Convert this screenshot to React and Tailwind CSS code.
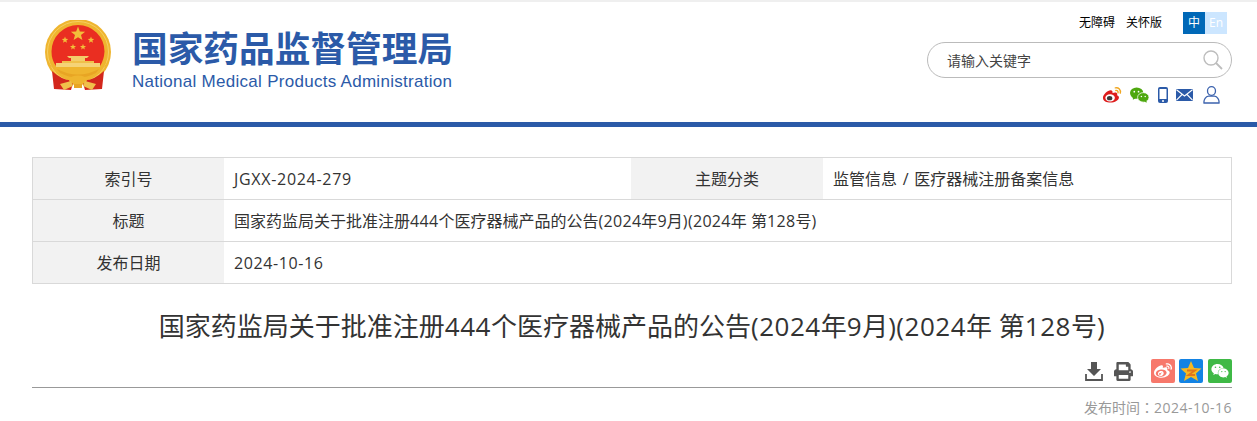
import { FaWeibo, FaWeixin, FaPrint } from "react-icons/fa";

const FONT = "[font-family:'Open_Sans','Noto_Sans_CJK_SC',sans-serif]";

// star outline around (cx, cy), r is the outer radius
const starPoints = (cx, cy, r) =>
  Array.from({ length: 10 }, (_, i) => {
    const a = -Math.PI / 2 + (i * Math.PI) / 5;
    const d = i % 2 ? r * 0.42 : r;
    return `${(cx + d * Math.cos(a)).toFixed(2)},${(cy + d * Math.sin(a)).toFixed(2)}`;
  }).join(" ");

const Emblem = () => (
  <svg width="68" height="72" viewBox="0 0 68 72" className="shrink-0">
    <circle cx="34" cy="32" r="33" fill="#efb52f" />
    <circle cx="34" cy="32" r="30.500" fill="none" stroke="#f6cf62" strokeWidth="1" />
    <path d="M34 5 A26.500 26.500 0 0 1 60.500 31.500 Q60 40 56 46 H12 Q7.500 40 7.500 31.500 A26.500 26.500 0 0 1 34 5Z" fill="#ea2e21" />
    <polygon points={starPoints(34, 14, 7.500)} fill="#f2bf3a" />
    <polygon points={starPoints(21, 20, 3.400)} fill="#f2bf3a" />
    <polygon points={starPoints(47, 20, 3.400)} fill="#f2bf3a" />
    <polygon points={starPoints(29, 27, 3.200)} fill="#f2bf3a" />
    <polygon points={starPoints(39, 27, 3.200)} fill="#f2bf3a" />
    <path d="M23 36 H45 L43 38 H41 V41 H27 V38 H25 Z" fill="#f3cd6a" />
    <path d="M18 41 H50 V44 H18 Z" fill="#f0c04a" />
    <path d="M12 43 H56 V47 H12 Z" fill="#f5d377" />
    <path d="M8 51 Q20 62 30 60 L27 70 L10 69 Z" fill="#d3271c" />
    <path d="M60 51 Q48 62 38 60 L41 70 L58 69 Z" fill="#d3271c" />
    <path d="M6 46 Q34 66 62 46 L64 40 Q60 50 50 55 Q34 62 18 55 Q8 50 4 40 Z" fill="#efb52f" />
    <path d="M13 49 Q34 60 55 49 L52 53 Q34 62 16 53 Z" fill="#e8a524" />
    <ellipse cx="34" cy="60" rx="9" ry="4.500" fill="#efb52f" />
    <path d="M16 64 L27 61 L29 66 L20 70 Z M52 64 L41 61 L39 66 L48 70 Z" fill="#f0c04a" />
    <path d="M30 64 H38 V68 H30 Z" fill="#e8a524" />
  </svg>
);

const SearchIcon = () => (
  <svg width="20" height="20" viewBox="0 0 20 20" fill="none" stroke="#bdbdbd" strokeWidth="1.400">
    <circle cx="8" cy="8" r="7" />
    <path d="M13 13 L19 19" strokeWidth="1.800" />
  </svg>
);

const WeiboColor = () => (
  <svg width="20" height="18" viewBox="0 0 21 18">
    <path d="M1 12c0-3.500 5-8 8-8 2 0 2.400 1.600 2 3 3-1 5-.6 5 1.200 0 .6-.2 1-.2 1 1.500.5 2 1.500 2 2.500 0 2.800-4.500 5.300-8.800 5.300S1 15.500 1 12z" fill="#dd1c1c" />
    <ellipse cx="8.500" cy="12" rx="5" ry="3.800" fill="#fff" />
    <ellipse cx="8" cy="12.300" rx="2.800" ry="2.300" fill="#3a3a3a" />
    <path d="M14 1.500c3.500-.6 6 2 5.200 5.500M14.500 4.200c1.700-.3 2.700.9 2.300 2.500" fill="none" stroke="#f0a722" strokeWidth="1.500" strokeLinecap="round" />
  </svg>
);

const WechatColor = () => (
  <svg width="19" height="16" viewBox="0 0 20 16">
    <ellipse cx="7" cy="6" rx="7" ry="6" fill="#4ea80f" />
    <path d="M3 9 L3 13 L7 11 Z" fill="#4ea80f" />
    <ellipse cx="14" cy="10.500" rx="6" ry="5" fill="#4ea80f" stroke="#fff" strokeWidth="0.800" />
    <path d="M17 14 L18 16 L14.500 15 Z" fill="#4ea80f" />
    <circle cx="4.500" cy="4.500" r="0.900" fill="#fff" />
    <circle cx="9" cy="4.500" r="0.900" fill="#fff" />
    <circle cx="12" cy="9.500" r="0.800" fill="#fff" />
    <circle cx="16" cy="9.500" r="0.800" fill="#fff" />
  </svg>
);

const PhoneIcon = () => (
  <svg width="10" height="16" viewBox="0 0 10 16">
    <rect width="10" height="16" rx="2" fill="#2b5aa8" />
    <rect x="1.500" y="2" width="7" height="10" fill="#fff" />
    <circle cx="5" cy="14" r="1" fill="#fff" />
  </svg>
);

const MailIcon = () => (
  <svg width="17" height="12" viewBox="0 0 17 12">
    <rect width="17" height="12" rx="1" fill="#2b5aa8" />
    <path d="M0.500 0.800 L8.500 7 L16.500 0.800 M0.500 11.200 L6 5.500 M16.500 11.200 L11 5.500" fill="none" stroke="#fff" strokeWidth="1.100" />
  </svg>
);

const UserIcon = () => (
  <svg width="17" height="18" viewBox="0 0 17 18" fill="none" stroke="#3b62ad" strokeWidth="1.300">
    <ellipse cx="8.500" cy="5" rx="4" ry="4.300" />
    <path d="M1 17c-.5-3.800 2-6.500 4.500-6.800h6c2.500.3 5 3 4.500 6.800z" />
  </svg>
);

const DownloadIcon = () => (
  <svg width="18" height="19" viewBox="0 0 18 19" fill="#555">
    <path d="M6 0 H12 V7 H16 L9 14 L2 7 H6 Z" />
    <path d="M1 12 V18 H17 V12" fill="none" stroke="#555" strokeWidth="1.800" />
  </svg>
);

const QzoneIcon = () => (
  <svg width="24" height="24" viewBox="0 0 24 24">
    <rect width="24" height="24" rx="2" fill="#1383e4" />
    <polygon points="12,2 15,9 22.500,9.500 17,14.500 19,22 12,18 5,22 7,14.500 1.500,9.500 9,9" fill="#f5b922" />
    <path d="M8 11.500 H16 L9.500 16 H16" fill="none" stroke="#e2761a" strokeWidth="1.800" />
  </svg>
);

const Row = ({ children, last }) => (
  <div className={`flex items-stretch text-[16px] text-[#333] ${last ? "h-[41px]" : "h-[42px] border-b border-[#d9d9d9]"}`}>
    {children}
  </div>
);

const Label = ({ children, className = "w-[191px]" }) => (
  <div className={`flex shrink-0 items-center justify-center bg-[#f2f2f2] ${className}`}>{children}</div>
);

const Value = ({ children, className = "" }) => (
  <div className={`flex items-center whitespace-pre px-[10px] ${className}`}>{children}</div>
);

// latin runs sit a little wider than the CJK font's own
const Num = ({ children }) => <span className="tracking-[0.02em]">{children}</span>;

const Title = () => (
  <>
    国家药监局关于批准注册<Num>444</Num>个医疗器械产品的公告<Num>(2024</Num>年<Num>9</Num>月<Num>)(2024</Num>年 第<Num>128</Num>号<Num>)</Num>
  </>
);

export default function App() {
  return (
    <div className={`${FONT} w-[1257px] h-[421px] overflow-hidden bg-white`}>
      <header className="h-[127px] border-t-2 border-b-[5px] border-t-[#efefef] border-b-[#2b5aa8]">
        <div className="flex h-[120px] justify-between">
          <div className="flex">
            <div className="pl-[44px] pt-[18px]">
              <Emblem />
            </div>
            <div className="pl-[20px] pt-[24px]">
              <div className="text-[35.700px] leading-[44px] font-bold text-[#2b5aa8] whitespace-nowrap">
                国家药品监督管理局
              </div>
              <div className="mt-[2px] text-[17px] leading-[20px] tracking-[0.280px] text-[#2b5aa8] whitespace-nowrap [font-family:'Liberation_Sans',sans-serif]">
                National Medical Products Administration
              </div>
            </div>
          </div>
          <div className="flex w-[305px] flex-col items-end pr-[25px]">
            <div className="mt-[10px] mr-[5px] flex h-[22px] items-center">
              <span className="text-[12px] text-black">无障碍</span>
              <span className="ml-[11px] text-[12px] text-black">关怀版</span>
              <span className="ml-[21px] flex h-[22px] w-[22px] items-center justify-center bg-[#0068b7] text-[12px] text-white">中</span>
              <span className="flex h-[22px] w-[22px] items-center justify-center bg-[#cce6ff] text-[12px] text-white">En</span>
            </div>
            <div className="mt-[8px] flex h-[36px] w-[305px] shrink-0 items-center justify-between rounded-[18px] border border-[#bbb] pl-[19px] pr-[8px]">
              <span className="text-[14px] text-[#444]">请输入关键字</span>
              <SearchIcon />
            </div>
            <div className="mt-[7px] mr-[12px] flex h-[20px] items-center">
              <WeiboColor />
              <span className="ml-[8px]"><WechatColor /></span>
              <span className="ml-[9px]"><PhoneIcon /></span>
              <span className="ml-[8px]"><MailIcon /></span>
              <span className="ml-[10px]"><UserIcon /></span>
            </div>
          </div>
        </div>
      </header>

      <div className="mx-[32px] mt-[30px] w-[1200px] border border-[#d9d9d9]">
        <Row>
          <Label>索引号</Label>
          <Value className="w-[407px] tracking-[0.700px]">JGXX-2024-279</Value>
          <Label className="w-[192px]">主题分类</Label>
          <Value>监管信息<span className="mx-[1.500px]"> / </span>医疗器械注册备案信息</Value>
        </Row>
        <Row>
          <Label>标题</Label>
          <Value><Title /></Value>
        </Row>
        <Row last>
          <Label>发布日期</Label>
          <Value className="tracking-[0.600px]">2024-10-16</Value>
        </Row>
      </div>

      <h1 className="mx-[32px] mt-[23px] w-[1200px] text-center text-[26px] leading-[38px] font-normal text-[#333] whitespace-nowrap">
        <Title />
      </h1>

      <div className="mx-[32px] mt-[14px] flex h-[29px] w-[1200px] items-start justify-end border-b border-[#999]">
        <span className="mr-[11px] mt-[3px]"><DownloadIcon /></span>
        <FaPrint className="mr-[18px] mt-[3px] text-[19px] text-[#555]" />
        <span className="mr-[4px] flex h-[24px] w-[24px] items-center justify-center rounded-[2px] bg-[#f7786b]">
          <FaWeibo className="text-[18px] text-white" />
        </span>
        <span className="mr-[5px]"><QzoneIcon /></span>
        <span className="flex h-[24px] w-[24px] items-center justify-center rounded-[2px] bg-[#3fb946]">
          <FaWeixin className="text-[18px] text-white" />
        </span>
      </div>

      <div className="mx-[32px] mt-[9px] w-[1200px] text-right text-[14px] leading-[20px] text-[#999]">
        发布时间<span className="[font-family:'Noto_Sans_CJK_TC',sans-serif]">：</span><span className="tracking-[0.500px]">2024-10-16</span>
      </div>
    </div>
  );
}
